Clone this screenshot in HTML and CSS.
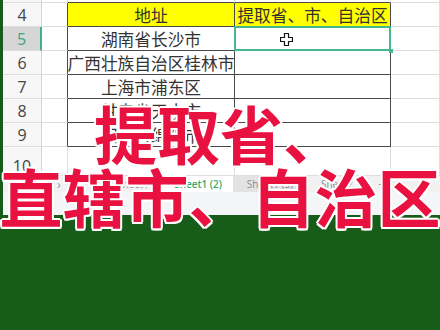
FILE: index.html
```html
<!DOCTYPE html>
<html lang="zh">
<head>
<meta charset="utf-8">
<title>提取省、直辖市、自治区</title>
<link rel="stylesheet" href="styles.css">
</head>
<body>
<div class="screen">
  <div class="sheet">
    <div class="rh r3"></div><div class="c"></div><div class="c top"></div><div class="c top"></div><div class="c"></div>

    <div class="rh">4</div><div class="c edge"></div><div class="c t hd">地址</div><div class="c t hd">提取省、市、自治区</div><div class="c"></div>

    <div class="rh sel">5</div><div class="c edge"></div><div class="c t">湖南省长沙市</div><div class="c t active"><svg class="cursor" width="13" height="13" viewBox="0 0 13 13"><path d="M4.5 0.5h4v4h4v4h-4v4h-4v-4h-4v-4h4z" fill="#fff" stroke="#111" stroke-width="1.2" stroke-linejoin="round"/></svg></div><div class="c"></div>

    <div class="rh">6</div><div class="c edge"></div><div class="c t">广西壮族自治区桂林市</div><div class="c t"></div><div class="c"></div>

    <div class="rh">7</div><div class="c edge"></div><div class="c t">上海市浦东区</div><div class="c t"></div><div class="c"></div>

    <div class="rh">8</div><div class="c edge"></div><div class="c t">甘肃省天水市</div><div class="c t"></div><div class="c"></div>

    <div class="rh">9</div><div class="c edge"></div><div class="c t">四川省绵阳市</div><div class="c t"></div><div class="c"></div>

    <div class="rh r10">10</div><div class="c"></div><div class="c"></div><div class="c"></div><div class="c"></div>
  </div>
  <div class="tabbar">
    <div class="nav"><span>‹</span><span>›</span></div>
    <div class="tab">Sheet1</div>
    <div class="tab current">Sheet1 (2)</div>
    <div class="tab dim">Sheet1 (3)</div>
    <div class="tab">Sheet2</div>
    <div class="add">+</div>
  </div>
  <div class="status"></div>
</div>
<div class="overlay">
  <div class="line">提取省、</div>
  <div class="line">直辖市、自治区</div>
</div>
</body>
</html>
```
FILE: styles.css
```css
html, body {
  margin: 0;
  padding: 0;
}
body {
  width: 440px;
  height: 330px;
  background: #175c19;
  position: relative;
  overflow: hidden;
}
.screen {
  margin-left: 3px;
  height: 215px;
  background: #f4f4f5;
  display: flex;
  flex-direction: column;
}
.sheet {
  display: grid;
  grid-template-columns: 39px 26px 167px 156px 1fr;
  grid-template-rows: 3px repeat(6, 24px) 29px;
  background: #fff;
}
.sheet > div {
  box-sizing: border-box;
  border-right: 1px solid #dedede;
  border-bottom: 1px solid #dedede;
  display: flex;
  align-items: center;
  justify-content: center;
  white-space: nowrap;
  overflow: hidden;
  font-family: "Noto Sans CJK SC", sans-serif;
  font-size: 16.7px;
  color: #333;
}
.sheet > .rh {
  background: #f7f7f7;
  font-family: "Open Sans", "Liberation Sans", sans-serif;
  font-size: 16px;
  color: #444;
  border-right: 1px solid #d6d6d6;
}
.sheet > .rh.sel {
  background: #d6d6d6;
  color: #3aa683;
  border-right: 2px solid #3fb08a;
}
.sheet > .rh.r10 {
  align-items: flex-start;
  padding-top: 8px;
}
.sheet > .top {
  border-bottom: 1px solid #4a4a4a;
}
.sheet > .edge {
  border-right: 1px solid #4a4a4a;
}
.sheet > .t {
  border-right: 1px solid #4a4a4a;
  border-bottom: 1px solid #4a4a4a;
}
.sheet > .hd {
  background: #ffff00;
}
.sheet > .active {
  position: relative;
  overflow: visible;
  justify-content: flex-start;
}
.active::after {
  content: "";
  position: absolute;
  left: -1px;
  top: -1px;
  right: -1px;
  bottom: -1px;
  border: 2px solid #45b592;
}
.active::before {
  content: "";
  position: absolute;
  right: -3px;
  bottom: -3px;
  width: 4px;
  height: 4px;
  background: #45b592;
  z-index: 1;
}
.cursor {
  margin-left: 45px;
  margin-top: 1px;
}
.tabbar {
  height: 16px;
  display: flex;
  align-items: stretch;
  background: #f1f1f1;
  font-family: "Open Sans", "Liberation Sans", sans-serif;
  font-size: 10px;
  color: #8c8c8c;
}
.nav {
  width: 100px;
  display: flex;
  align-items: center;
  gap: 8px;
  padding-left: 42px;
  box-sizing: border-box;
  font-size: 13px;
  color: #a0a0a0;
}
.tab {
  display: flex;
  align-items: center;
  justify-content: center;
  width: 60px;
}
.tab.current {
  width: 70px;
  background: #fff;
  color: #34a96a;
  font-weight: 600;
}
.tab.dim {
  width: 74px;
  background: #e3e3e3;
}
.add {
  width: 30px;
  display: flex;
  align-items: center;
  justify-content: center;
  font-size: 13px;
}
.status {
  flex: 1;
  background: #f4f5f7;
}
.overlay {
  position: absolute;
  left: 0;
  top: 100px;
  width: 440px;
  display: flex;
  flex-direction: column;
  align-items: center;
  font-family: "Noto Sans CJK SC", sans-serif;
  font-weight: 700;
  font-size: 63px;
  line-height: 63px;
  color: #e8113f;
  white-space: nowrap;
  text-shadow:
    2px 0 0 #fff, -2px 0 0 #fff, 0 2px 0 #fff, 0 -2px 0 #fff,
    1.5px 1.5px 0 #fff, -1.5px 1.5px 0 #fff, 1.5px -1.5px 0 #fff, -1.5px -1.5px 0 #fff;
}
```
